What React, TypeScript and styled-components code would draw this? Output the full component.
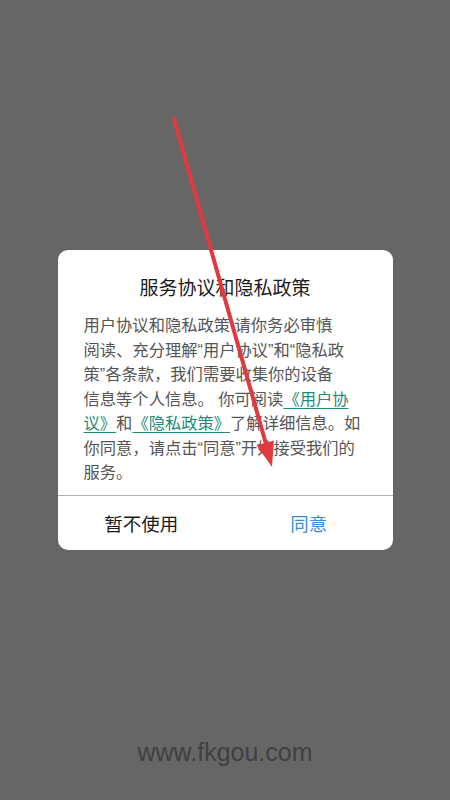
import React from 'react';
import styled, {createGlobalStyle} from 'styled-components';

const GlobalStyle = createGlobalStyle`
  html, body {
    margin: 0;
    padding: 0;
    background: #666666;
  }
  body {
    font-family: "Liberation Sans", "Noto Sans CJK SC", sans-serif;
  }
`;

const Page = styled.div`
  position: relative;
  width: 450px;
  height: 800px;
  background: #666666;
  display: flex;
  flex-direction: column;
  align-items: center;
  padding-top: 250px;
  padding-bottom: 33px;
  box-sizing: border-box;
  overflow: hidden;
`;

const Dialog = styled.div`
  width: 335px;
  background: #ffffff;
  border-radius: 10px;
  display: flex;
  flex-direction: column;
  overflow: hidden;
`;

const Title = styled.h2`
  margin: 0;
  padding-top: 26px;
  font-size: 19px;
  line-height: 26px;
  font-weight: normal;
  color: #1a1a1a;
  text-align: center;
`;

const Body = styled.p`
  margin: 11px 0 0;
  padding: 0 20px 10px 26px;
  font-size: 16.3px;
  line-height: 24.5px;
  color: #555555;
  white-space: nowrap;
`;

const Link = styled.span`
  color: #1e8c78;
  text-decoration: underline;
  text-underline-offset: 3px;
`;

const Footer = styled.div`
  display: grid;
  grid-template-columns: 1fr 1fr;
  border-top: 1px solid #b0b0b0;
  height: 54px;
`;

const ActionButton = styled.button<{$primary?: boolean}>`
  border: none;
  background: transparent;
  font-family: inherit;
  font-size: 18.5px;
  color: ${p => (p.$primary ? '#3a8fd4' : '#1a1a1a')};
  padding: 0;
  cursor: pointer;
`;

const Watermark = styled.div`
  margin-top: auto;
  font-family: "Liberation Sans", Arial, sans-serif;
  font-size: 25px;
  line-height: 30px;
  color: #404040;
`;

const Annotation = styled.svg`
  position: absolute;
  left: 0;
  top: 0;
  width: 450px;
  height: 800px;
  pointer-events: none;
`;

export default function App() {
  return (
    <>
      <GlobalStyle />
      <Page>
        <Dialog>
          <Title>服务协议和隐私政策</Title>
          <Body>
            用户协议和隐私政策 请你务必审慎
            <br />
            阅读、充分理解“用户协议”和“隐私政
            <br />
            策”各条款，我们需要收集你的设备
            <br />
            信息等个人信息。 你可阅读<Link>《用户协</Link>
            <br />
            <Link>议》</Link>和<Link>《隐私政策》</Link>了解详细信息。如
            <br />
            你同意，请点击“同意”开始接受我们的
            <br />
            服务。
          </Body>
          <Footer>
            <ActionButton>暂不使用</ActionButton>
            <ActionButton $primary>同意</ActionButton>
          </Footer>
        </Dialog>
        <Watermark>www.fkgou.com</Watermark>
        <Annotation viewBox="0 0 450 800">
          <line
            x1="174"
            y1="119"
            x2="266"
            y2="444"
            stroke="#e0393e"
            strokeWidth="4"
            strokeLinecap="round"
          />
          <polygon points="272,467 256.5,445.3 273.9,440.5" fill="#e0393e" />
        </Annotation>
      </Page>
    </>
  );
}
